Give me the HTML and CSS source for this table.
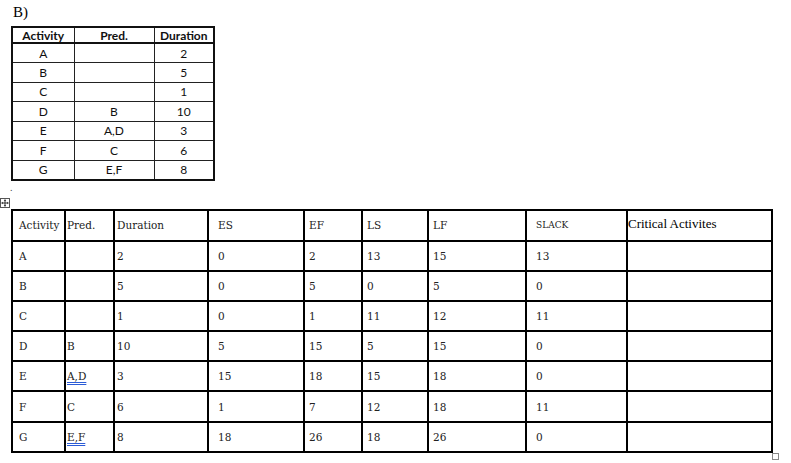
FILE: index.html
```html
<!DOCTYPE html>
<html>
<head>
<meta charset="utf-8">
<link rel="stylesheet" href="styles.css">
</head>
<body>
<div class="label">B)</div>
<table class="src">
  <colgroup><col class="c1"><col class="c2"><col class="c3"></colgroup>
  <tr class="hrow"><th>Activity</th><th>Pred.</th><th class="dur">Duration</th></tr>
  <tr><td>A</td><td></td><td>2</td></tr>
  <tr><td>B</td><td></td><td>5</td></tr>
  <tr><td>C</td><td></td><td>1</td></tr>
  <tr><td>D</td><td>B</td><td>10</td></tr>
  <tr><td>E</td><td>A,D</td><td>3</td></tr>
  <tr><td>F</td><td>C</td><td>6</td></tr>
  <tr><td>G</td><td>E,F</td><td>8</td></tr>
</table>
<div class="dot">.</div>
<div class="wrap">
  <span class="handle"><svg width="10" height="10" viewBox="0 0 10 10"><rect x="0.5" y="0.5" width="9" height="9" fill="#fff" stroke="#555"/><path d="M5 1.5V8.5M1.5 5H8.5" stroke="#333" stroke-width="1"/><path d="M5 1.5L3.8 2.9H6.2Z M5 8.5L3.8 7.1H6.2Z M1.5 5L2.9 3.8V6.2Z M8.5 5L7.1 3.8V6.2Z" fill="#333"/></svg></span>
  <table class="cpm">
    <colgroup>
      <col class="k1"><col class="k2"><col class="k3"><col class="k4"><col class="k5"><col class="k6"><col class="k7"><col class="k8"><col class="k9">
    </colgroup>
    <tr class="head"><td class="p1">Activity</td><td class="p2">Pred.</td><td class="p3">Duration</td><td class="p4">ES</td><td class="p5">EF</td><td class="p6">LS</td><td class="p7">LF</td><td class="p8 small">SLACK</td><td class="p9 crit">Critical Activites</td></tr>
    <tr><td class="p1">A</td><td class="p2"></td><td class="p3">2</td><td class="p4">0</td><td class="p5">2</td><td class="p6">13</td><td class="p7">15</td><td class="p8">13</td><td class="p9"></td></tr>
    <tr><td class="p1">B</td><td class="p2"></td><td class="p3">5</td><td class="p4">0</td><td class="p5">5</td><td class="p6">0</td><td class="p7">5</td><td class="p8">0</td><td class="p9"></td></tr>
    <tr><td class="p1">C</td><td class="p2"></td><td class="p3">1</td><td class="p4">0</td><td class="p5">1</td><td class="p6">11</td><td class="p7">12</td><td class="p8">11</td><td class="p9"></td></tr>
    <tr><td class="p1">D</td><td class="p2">B</td><td class="p3">10</td><td class="p4">5</td><td class="p5">15</td><td class="p6">5</td><td class="p7">15</td><td class="p8">0</td><td class="p9"></td></tr>
    <tr><td class="p1">E</td><td class="p2"><span class="gram">A,D</span></td><td class="p3">3</td><td class="p4">15</td><td class="p5">18</td><td class="p6">15</td><td class="p7">18</td><td class="p8">0</td><td class="p9"></td></tr>
    <tr><td class="p1">F</td><td class="p2">C</td><td class="p3">6</td><td class="p4">1</td><td class="p5">7</td><td class="p6">12</td><td class="p7">18</td><td class="p8">11</td><td class="p9"></td></tr>
    <tr><td class="p1">G</td><td class="p2"><span class="gram">E,F</span></td><td class="p3">8</td><td class="p4">18</td><td class="p5">26</td><td class="p6">18</td><td class="p7">26</td><td class="p8">0</td><td class="p9"></td></tr>
  </table>
  <span class="resize"></span>
</div>
</body>
</html>
```
FILE: styles.css
```css
html, body { margin: 0; padding: 0; background: #fff; color: #000; }
body { width: 791px; height: 463px; overflow: hidden; }

.label {
  font-family: "Liberation Serif", serif;
  font-size: 15px;
  line-height: 18px;
  height: 26px;
  padding-left: 13px;
  padding-top: 3px;
  box-sizing: border-box;
}

.src {
  margin-left: 11px;
  border-collapse: collapse;
  table-layout: fixed;
  width: 202px;
  border: 2px solid #111;
  font-family: Lato, "Open Sans", sans-serif;
  font-size: 12px;
  color: #111;
}
.src .c1 { width: 62px; }
.src .c2 { width: 80px; }
.src .c3 { width: 60px; }
.src tr { height: 19.5px; }
.src tr.hrow { height: 16px; }
.src th, .src td {
  border: 1px solid #222;
  text-align: center;
  padding: 0;
  line-height: 13px;
}
.src .hrow th {
  font-weight: bold;
  border-bottom: 2px solid #111;
}

.dot {
  font-family: "Liberation Serif", serif;
  font-size: 10px;
  line-height: 10px;
  height: 28px;
  padding-left: 10px;
  padding-top: 2px;
  box-sizing: border-box;
  color: #444;
}

.wrap { position: relative; padding-left: 11px; }
.handle { position: absolute; left: 0; top: -11px; width: 10px; height: 10px; line-height: 0; }
.resize {
  position: absolute;
  left: 772px;
  top: 244px;
  width: 5px;
  height: 5px;
  border: 1px solid #888;
  background: #fff;
}

.cpm {
  border-collapse: collapse;
  table-layout: fixed;
  width: 760px;
  font-family: "DejaVu Serif", serif;
  font-size: 10.5px;
  color: #222;
}
.cpm .k1 { width: 53px; }
.cpm .k2 { width: 49px; }
.cpm .k3 { width: 94px; }
.cpm .k4 { width: 96px; }
.cpm .k5 { width: 58px; }
.cpm .k6 { width: 66px; }
.cpm .k7 { width: 98px; }
.cpm .k8 { width: 101px; }
.cpm .k9 { width: 145px; }
.cpm tr { height: 30.2px; }
.cpm tr.head { height: 31px; }
.cpm td {
  border: 2px solid #000;
  padding: 0;
  line-height: 12px;
  vertical-align: middle;
  white-space: nowrap;
}
.cpm .p1 { padding-left: 6px; }
.cpm .p2 { padding-left: 1px; }
.cpm .p3 { padding-left: 2px; }
.cpm .p4 { padding-left: 9px; }
.cpm .p5 { padding-left: 4px; }
.cpm .p6 { padding-left: 4px; }
.cpm .p7 { padding-left: 4px; }
.cpm .p8 { padding-left: 9px; }
.cpm .p9 { padding-left: 0; }
.cpm .small { font-size: 9px; }
.cpm .crit {
  font-family: "Liberation Serif", serif;
  font-size: 13px;
  line-height: 14px;
  color: #000;
  vertical-align: top;
  padding-top: 6px;
}
.gram {
  text-decoration: underline double #2a5bd7;
  text-underline-offset: 2px;
}
```
